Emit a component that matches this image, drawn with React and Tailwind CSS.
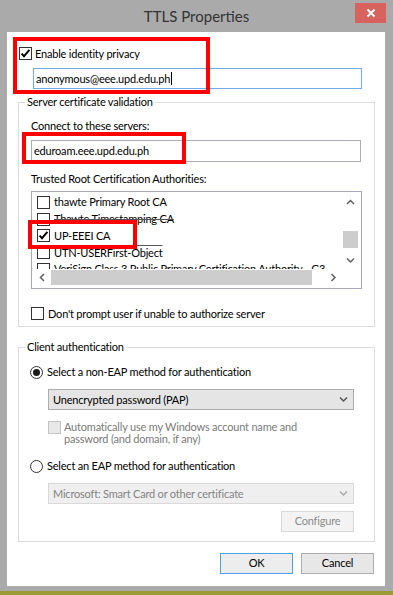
import React from "react";

function Check({ checked = false, disabled = false }) {
  return (
    <span
      className={
        disabled
          ? "flex h-[13px] w-[13px] shrink-0 items-center justify-center border border-[#c4c4c4] bg-[#e8e8e8]"
          : "flex h-[13px] w-[13px] shrink-0 items-center justify-center border border-[#333333] bg-white"
      }
    >
      {checked && (
        <svg width="11" height="11" viewBox="0 0 11 11">
          <path d="M1.6 5.6 L4 8.2 L9.4 1.8" stroke="#000" strokeWidth="1.9" fill="none" />
        </svg>
      )}
    </span>
  );
}

function Radio({ checked = false }) {
  return (
    <span className="flex h-[13px] w-[13px] shrink-0 items-center justify-center rounded-full border border-[#333333] bg-white">
      {checked && <span className="h-[7px] w-[7px] rounded-full bg-[#1a1a1a]" />}
    </span>
  );
}

function Chevron({ color = "#555555", dir = "down" }) {
  const d =
    dir === "down"
      ? "M1 1.5 L4.5 5 L8 1.5"
      : dir === "up"
      ? "M1 5 L4.5 1.5 L8 5"
      : dir === "left"
      ? "M5 1 L1.5 4.5 L5 8"
      : "M1.5 1 L5 4.5 L1.5 8";
  const w = dir === "down" || dir === "up" ? 9 : 7;
  const h = dir === "down" || dir === "up" ? 7 : 9;
  return (
    <svg width={w} height={h} viewBox={`0 0 ${w} ${h}`}>
      <path d={d} stroke={color} strokeWidth="1.5" fill="none" />
    </svg>
  );
}

const certs = [
  { name: "thawte Primary Root CA" },
  { name: "Thawte Timestamping CA", strike: true },
  { name: "UP-EEEI CA", checked: true },
  { name: "UTN-USERFirst-Object", over: true },
  { name: "VeriSign Class 3 Public Primary Certification Authority - G3" },
];

export default function App() {
  return (
    <div className="flex h-[595px] w-[393px] flex-col overflow-hidden bg-[#aaaaaa] font-['Lato',sans-serif] text-[11px] tracking-[-0.2px] text-black">
      {/* title bar */}
      <div className="grid h-[32px] shrink-0 grid-cols-[1fr_auto_1fr]">
        <div />
        <div className="flex items-center text-[15px] leading-[20px] tracking-normal text-[#333333]">TTLS Properties</div>
        <div className="flex justify-end pr-[7px] pt-[3px]">
          <div className="flex h-[20px] w-[31px] items-center justify-center bg-[#d8625d]">
            <svg width="10" height="10" viewBox="0 0 10 10">
              <path d="M1.5 1.5 L8.5 8.5 M8.5 1.5 L1.5 8.5" stroke="#fff" strokeWidth="2" />
            </svg>
          </div>
        </div>
      </div>

      {/* client area */}
      <div className="relative ml-[7px] flex h-[554px] w-[378px] shrink-0 flex-col bg-white">
        {/* identity privacy */}
        <div className="pl-[12px] pt-[15px]">
          <div className="flex h-[13px] items-center gap-[3px]">
            <Check checked />
            <span className="leading-[16px]">Enable identity privacy</span>
          </div>
          <div className="ml-[14px] mt-[8px] flex h-[21px] w-[329px] items-center border border-[#73abe4] pl-[2px] leading-[16px]">
            <span>anonymous@eee.upd.edu.ph</span>
            <span className="ml-[1px] h-[13px] w-[1px] bg-black" />
          </div>
        </div>

        {/* server certificate validation */}
        <fieldset className="ml-[11px] mt-[5px] w-[357px] border border-[#dcdcdc]">
          <legend className="ml-[6px] px-[2px] leading-[16px]">Server certificate validation</legend>
          <div className="pb-[6px] pl-[12px] pt-[8px]">
            <div className="leading-[16px]">Connect to these servers:</div>
            <div className="mt-[6px] flex h-[22px] w-[330px] items-center border border-[#abadb3] pl-[2px] leading-[16px]">
              eduroam.eee.upd.edu.ph
            </div>
            <div className="mt-[9px] leading-[16px]">Trusted Root Certification Authorities:</div>
            <div className="mt-[4px] grid h-[98px] w-[331px] grid-cols-[1fr_17px] grid-rows-[1fr_17px] border border-[#a7a7b7] p-[2px]">
              <div className="overflow-hidden">
                {certs.map((c) => (
                  <div key={c.name} className="flex h-[16.75px] items-center gap-[4px] whitespace-nowrap pl-[3px]">
                    <Check checked={c.checked} />
                    <span
                      className={
                        c.strike
                          ? "leading-[16px] line-through decoration-[#555555]"
                          : c.over
                          ? "leading-[16px] overline decoration-[#555555]"
                          : "leading-[16px]"
                      }
                    >
                      {c.name}
                    </span>
                  </div>
                ))}
              </div>
              <div className="flex flex-col items-center">
                <div className="flex h-[17px] w-[17px] items-center justify-center">
                  <Chevron dir="up" color="#606060" />
                </div>
                <div className="flex-1" />
                <div className="mb-[4px] h-[17px] w-[15px] bg-[#cdcdcd]" />
                <div className="flex h-[17px] w-[17px] items-center justify-center">
                  <Chevron dir="down" color="#606060" />
                </div>
              </div>
              <div className="flex items-center">
                <div className="flex h-[17px] w-[17px] items-center justify-center">
                  <Chevron dir="left" color="#606060" />
                </div>
                <div className="h-[15px] w-[261px] bg-[#cdcdcd]" />
                <div className="flex-1" />
                <div className="flex h-[17px] w-[17px] items-center justify-center">
                  <Chevron dir="right" color="#606060" />
                </div>
              </div>
              <div />
            </div>
            <div className="mt-[18px] flex h-[13px] items-center gap-[4px]">
              <Check />
              <span className="leading-[16px]">Don't prompt user if unable to authorize server</span>
            </div>
          </div>
        </fieldset>

        {/* client authentication */}
        <fieldset className="ml-[11px] mt-[12px] w-[357px] border border-[#dcdcdc]">
          <legend className="ml-[6px] px-[2px] leading-[16px]">Client authentication</legend>
          <div className="pb-[9px] pl-[11px] pt-[9px]">
            <div className="flex h-[16px] items-center gap-[4px]">
              <Radio checked />
              <span className="leading-[16px]">Select a non-EAP method for authentication</span>
            </div>
            <div className="ml-[18px] mt-[9px] flex h-[21px] w-[306px] items-center justify-between border border-[#acacac] bg-[#e5e5e5] pl-[4px] pr-[5px]">
              <span className="leading-[16px]">Unencrypted password (PAP)</span>
              <Chevron color="#555555" />
            </div>
            <div className="ml-[18px] mt-[11px] flex gap-[3px]">
              <Check disabled />
              <div className="leading-[12px] text-[#7a7a7a]">
                <div>Automatically use my Windows account name and</div>
                <div>password (and domain, if any)</div>
              </div>
            </div>
            <div className="mt-[13px] flex h-[16px] items-center gap-[4px]">
              <Radio />
              <span className="leading-[16px]">Select an EAP method for authentication</span>
            </div>
            <div className="ml-[18px] mt-[9px] flex w-[306px] flex-col items-end">
              <div className="flex h-[21px] w-[306px] items-center justify-between border border-[#d9d9d9] bg-[#efefef] pl-[4px] pr-[5px] text-[#838383]">
                <span className="leading-[16px]">Microsoft: Smart Card or other certificate</span>
                <Chevron color="#a8a8a8" />
              </div>
              <div className="mt-[7px] flex h-[21px] w-[73px] items-center justify-center border border-[#d9d9d9] bg-[#f3f3f3] text-[#8c8c8c]">
                Configure
              </div>
            </div>
          </div>
        </fieldset>

        {/* buttons */}
        <div className="mt-[11px] flex justify-end gap-[8px] pr-[11px]">
          <div className="flex h-[21px] w-[73px] items-center justify-center border border-[#4fa0e6] bg-[#ededed]">OK</div>
          <div className="flex h-[21px] w-[73px] items-center justify-center border border-[#adadad] bg-[#e7e7e7]">Cancel</div>
        </div>

        {/* annotation boxes */}
        <div className="pointer-events-none absolute left-[6px] top-[5px] h-[57px] w-[197px] border-[4px] border-[#ff0000]" />
        <div className="pointer-events-none absolute left-[15px] top-[100px] h-[32px] w-[164px] border-[4px] border-[#ff0000]" />
        <div className="pointer-events-none absolute left-[21px] top-[188px] h-[29px] w-[109px] border-[4px] border-[#ff0000]" />
      </div>

      <div className="h-[5px] shrink-0" />
      <div className="h-[4px] shrink-0 bg-[#9d9b37]" />
    </div>
  );
}
